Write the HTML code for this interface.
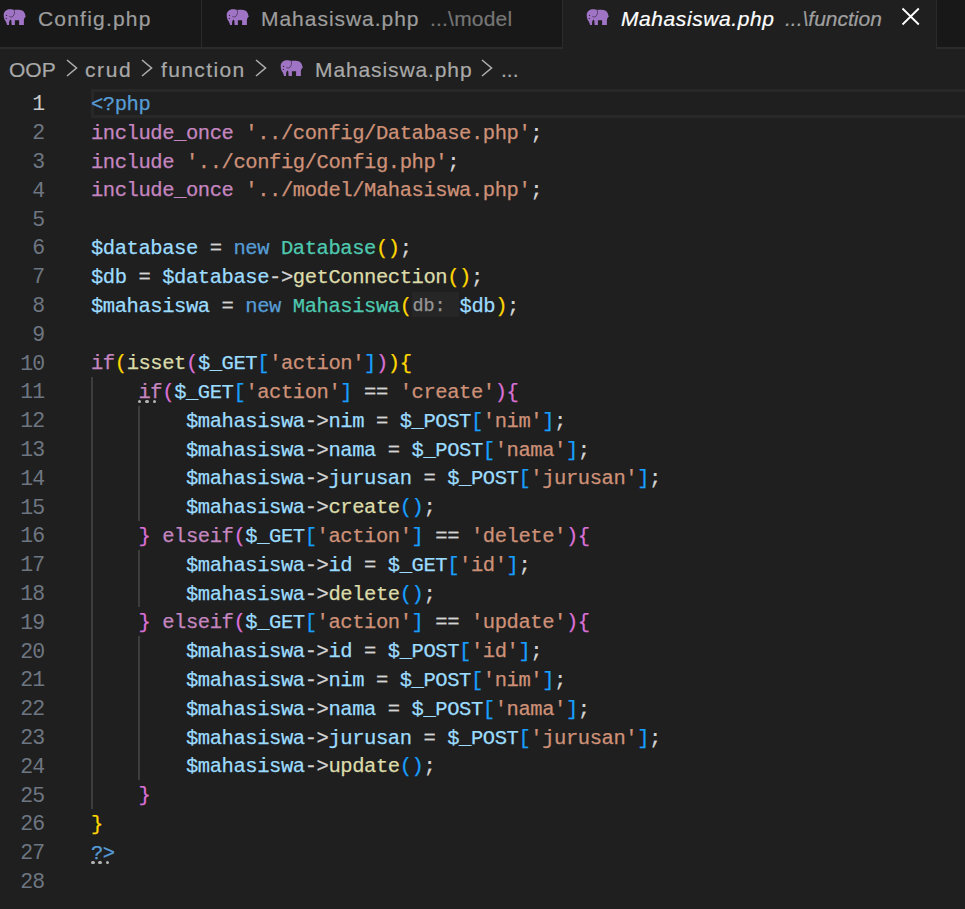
<!DOCTYPE html>
<html><head><meta charset="utf-8">
<style>
*{box-sizing:border-box}
html,body{margin:0;padding:0}
body{width:965px;height:909px;background:#1f1f1f;overflow:hidden;position:relative;font-family:"Liberation Sans",sans-serif}
.abs{position:absolute}
#tabbar{left:0;top:0;width:965px;height:49px;background:#181818}
#tabline{left:0;top:47px;width:965px;height:2px;background:#2b2b2b}
.sep{top:0;width:1px;height:49px;background:#2b2b2b}
#active{left:563px;top:0;width:373px;height:49px;background:#1f1f1f}
.tt{font-size:21px;white-space:nowrap;line-height:1;-webkit-text-stroke:0.2px}
.eleph{width:23px;height:16px}
#bc{left:0;top:49px;width:965px;height:33px}
.bct{font-size:21px;color:#a9a9a9;white-space:nowrap;line-height:1;-webkit-text-stroke:0.2px}
.chev{width:12px;height:18px}
#code{left:91px;top:91px;font-family:"Liberation Mono",monospace;font-size:20.5px;letter-spacing:-0.43px;color:#d4d4d4;-webkit-text-stroke:0.25px}
#code .n{white-space:pre}
.ln{position:absolute;left:0;height:28.8px;line-height:28.8px;white-space:pre}
#nums{left:0;top:90.4px;width:44px;font-family:"Liberation Mono",monospace;font-size:21.5px;letter-spacing:-1.05px;color:#6e7681;text-align:right}
.n{height:28.8px;line-height:28.8px}
.k{color:#c586c0}.t{color:#569cd6}.s{color:#ce9178}.v{color:#9cdcfe}.f{color:#dcdcaa}.c{color:#4ec9b0}
.b1{color:#ffd700}.b2{color:#da70d6}.b3{color:#179fff}
.h{display:inline-block;width:48px;padding-left:1px;color:#969696;font-size:18.5px;letter-spacing:-0.1px;position:relative;top:-1px}
.dot{position:absolute;width:3.4px;height:3.4px;border-radius:50%;background:#b4b4b4}
.guide{position:absolute;width:2px;background:#3d3d3d}
</style></head><body>
<div id="tabbar" class="abs"></div>
<div id="tabline" class="abs"></div>
<div class="abs sep" style="left:201px"></div>
<div class="abs sep" style="left:562px"></div>
<div id="active" class="abs"></div>
<div class="abs sep" style="left:936px"></div>

<!-- tab 1 -->
<svg class="abs eleph" style="left:3px;top:9px" viewBox="0 0 23 16"><use href="#el"/></svg>
<div class="abs tt" style="left:38px;top:8px;color:#9d9d9d;letter-spacing:1.2px">Config.php</div>
<!-- tab 2 -->
<svg class="abs eleph" style="left:226px;top:9px" viewBox="0 0 23 16"><use href="#el"/></svg>
<div class="abs tt" style="left:261px;top:8px;color:#9d9d9d;letter-spacing:0.97px">Mahasiswa.php</div>
<div class="abs tt" style="left:430px;top:8px;color:#757575;letter-spacing:0.2px">...\model</div>
<!-- active tab -->
<svg class="abs eleph" style="left:586px;top:9px" viewBox="0 0 23 16"><use href="#el"/></svg>
<div class="abs tt" style="left:621px;top:8px;color:#ffffff;font-style:italic;letter-spacing:0.58px">Mahasiswa.php</div>
<div class="abs tt" style="left:785px;top:8px;color:#a0a0a0;font-style:italic">...\function</div>
<svg class="abs" style="left:900px;top:6px" width="21" height="21" viewBox="0 0 21 21"><path d="M2.5 2.5L18.8 18.5M18.8 2.5L2.5 18.5" stroke="#ffffff" stroke-width="1.85" fill="none"/></svg>

<!-- breadcrumbs -->
<div class="abs bct" style="left:9px;top:59px">OOP</div>
<svg class="abs chev" style="left:66px;top:59px" viewBox="0 0 12 18"><path d="M1 1L10.5 9L1 17" stroke="#adadad" stroke-width="1.6" fill="none"/></svg>
<div class="abs bct" style="left:85px;top:59px;letter-spacing:1.6px">crud</div>
<svg class="abs chev" style="left:141px;top:59px" viewBox="0 0 12 18"><path d="M1 1L10.5 9L1 17" stroke="#adadad" stroke-width="1.6" fill="none"/></svg>
<div class="abs bct" style="left:161px;top:59px;letter-spacing:1.39px">function</div>
<svg class="abs chev" style="left:255px;top:59px" viewBox="0 0 12 18"><path d="M1 1L10.5 9L1 17" stroke="#adadad" stroke-width="1.6" fill="none"/></svg>
<svg class="abs eleph" style="left:280px;top:60px" viewBox="0 0 23 16"><use href="#el"/></svg>
<div class="abs bct" style="left:315px;top:59px;letter-spacing:0.89px">Mahasiswa.php</div>
<svg class="abs chev" style="left:481px;top:59px" viewBox="0 0 12 18"><path d="M1 1L10.5 9L1 17" stroke="#adadad" stroke-width="1.6" fill="none"/></svg>
<div class="abs bct" style="left:501px;top:59px">...</div>

<svg width="0" height="0" style="position:absolute">
<defs>
<g id="el">
<path fill="#a074c4" d="M0.7 6C0.7 2.8 3.2 0.3 6.8 0.3C9 0.3 10.5 0.6 11.2 1C12.5 0.6 16 0.8 18.5 1.2C21 1.8 22.3 4.5 22.5 7L23 7.6L22.2 7.9C21.5 9 21 9.5 20.9 11L20.9 15.9L16.1 15.9L16.1 11.2L11.9 11.2L11.9 15.9L8.6 15.9L8.3 11.5L7.3 10.5L6.2 12.5L6 15.9L4 15.9C3.5 13.5 2.5 12 1.5 10.5C0.9 9.3 0.7 7.8 0.7 6Z"/>
<path d="M11.2 1C11.8 3 11.6 5.6 10 7.3C9 8.2 7.5 8.3 6.3 7.3" stroke="#3a2a48" stroke-width="0.7" fill="none"/>
<circle cx="3.5" cy="6.4" r="0.65" fill="#3a2a48"/><circle cx="3.3" cy="9.4" r="0.65" fill="#3a2a48"/>
</g>
</defs>
</svg>

<div class="abs" style="left:412px;top:292px;width:47px;height:25px;background:#262626"></div>
<!-- current line border -->
<div class="abs" style="left:91px;top:89px;width:874px;height:29px;border:3px solid #282828;border-right:none"></div>

<!-- indent guides -->
<div class="guide" style="left:91px;top:377px;height:432px"></div>
<div class="guide" style="left:138px;top:406px;height:115px"></div>
<div class="guide" style="left:138px;top:550px;height:57px"></div>
<div class="guide" style="left:138px;top:636px;height:144px"></div>


<!-- hint dots -->
<div class="dot" style="left:138px;top:400px"></div><div class="dot" style="left:145.3px;top:400px"></div><div class="dot" style="left:152.8px;top:400px"></div>
<div class="dot" style="left:91.2px;top:861px"></div><div class="dot" style="left:98.2px;top:861px"></div><div class="dot" style="left:105.7px;top:861px"></div>
<div id="nums" class="abs">
<div class="n" style="color:#cccccc">1</div><div class="n">2</div><div class="n">3</div><div class="n">4</div><div class="n">5</div><div class="n">6</div><div class="n">7</div><div class="n">8</div><div class="n">9</div><div class="n">10</div><div class="n">11</div><div class="n">12</div><div class="n">13</div><div class="n">14</div><div class="n">15</div><div class="n">16</div><div class="n">17</div><div class="n">18</div><div class="n">19</div><div class="n">20</div><div class="n">21</div><div class="n">22</div><div class="n">23</div><div class="n">24</div><div class="n">25</div><div class="n">26</div><div class="n">27</div><div class="n">28</div>
</div>

<div id="code" class="abs">
<div class="n"><span class="t">&lt;?php</span></div>
<div class="n"><span class="k">include_once</span> <span class="s">'../config/Database.php'</span>;</div>
<div class="n"><span class="k">include</span> <span class="s">'../config/Config.php'</span>;</div>
<div class="n"><span class="k">include_once</span> <span class="s">'../model/Mahasiswa.php'</span>;</div>
<div class="n"> </div>
<div class="n"><span class="v">$database</span> = <span class="t">new</span> <span class="c">Database</span><span class="b1">()</span>;</div>
<div class="n"><span class="v">$db</span> = <span class="v">$database</span>-&gt;<span class="f">getConnection</span><span class="b1">()</span>;</div>
<div class="n"><span class="v">$mahasiswa</span> = <span class="t">new</span> <span class="c">Mahasiswa</span><span class="b1">(</span><span class="h">db: </span><span class="v">$db</span><span class="b1">)</span>;</div>
<div class="n"> </div>
<div class="n"><span class="k">if</span><span class="b1">(</span><span class="f">isset</span><span class="b2">(</span><span class="v">$_GET</span><span class="b3">[</span><span class="s">'action'</span><span class="b3">]</span><span class="b2">)</span><span class="b1">){</span></div>
<div class="n">    <span class="k">if</span><span class="b2">(</span><span class="v">$_GET</span><span class="b3">[</span><span class="s">'action'</span><span class="b3">]</span> == <span class="s">'create'</span><span class="b2">){</span></div>
<div class="n">        <span class="v">$mahasiswa</span>-&gt;<span class="v">nim</span> = <span class="v">$_POST</span><span class="b3">[</span><span class="s">'nim'</span><span class="b3">]</span>;</div>
<div class="n">        <span class="v">$mahasiswa</span>-&gt;<span class="v">nama</span> = <span class="v">$_POST</span><span class="b3">[</span><span class="s">'nama'</span><span class="b3">]</span>;</div>
<div class="n">        <span class="v">$mahasiswa</span>-&gt;<span class="v">jurusan</span> = <span class="v">$_POST</span><span class="b3">[</span><span class="s">'jurusan'</span><span class="b3">]</span>;</div>
<div class="n">        <span class="v">$mahasiswa</span>-&gt;<span class="f">create</span><span class="b3">()</span>;</div>
<div class="n">    <span class="b2">}</span> <span class="k">elseif</span><span class="b2">(</span><span class="v">$_GET</span><span class="b3">[</span><span class="s">'action'</span><span class="b3">]</span> == <span class="s">'delete'</span><span class="b2">){</span></div>
<div class="n">        <span class="v">$mahasiswa</span>-&gt;<span class="v">id</span> = <span class="v">$_GET</span><span class="b3">[</span><span class="s">'id'</span><span class="b3">]</span>;</div>
<div class="n">        <span class="v">$mahasiswa</span>-&gt;<span class="f">delete</span><span class="b3">()</span>;</div>
<div class="n">    <span class="b2">}</span> <span class="k">elseif</span><span class="b2">(</span><span class="v">$_GET</span><span class="b3">[</span><span class="s">'action'</span><span class="b3">]</span> == <span class="s">'update'</span><span class="b2">){</span></div>
<div class="n">        <span class="v">$mahasiswa</span>-&gt;<span class="v">id</span> = <span class="v">$_POST</span><span class="b3">[</span><span class="s">'id'</span><span class="b3">]</span>;</div>
<div class="n">        <span class="v">$mahasiswa</span>-&gt;<span class="v">nim</span> = <span class="v">$_POST</span><span class="b3">[</span><span class="s">'nim'</span><span class="b3">]</span>;</div>
<div class="n">        <span class="v">$mahasiswa</span>-&gt;<span class="v">nama</span> = <span class="v">$_POST</span><span class="b3">[</span><span class="s">'nama'</span><span class="b3">]</span>;</div>
<div class="n">        <span class="v">$mahasiswa</span>-&gt;<span class="v">jurusan</span> = <span class="v">$_POST</span><span class="b3">[</span><span class="s">'jurusan'</span><span class="b3">]</span>;</div>
<div class="n">        <span class="v">$mahasiswa</span>-&gt;<span class="f">update</span><span class="b3">()</span>;</div>
<div class="n">    <span class="b2">}</span></div>
<div class="n"><span class="b1">}</span></div>
<div class="n"><span class="t">?&gt;</span></div>
<div class="n"> </div>
</div>

</body></html>
